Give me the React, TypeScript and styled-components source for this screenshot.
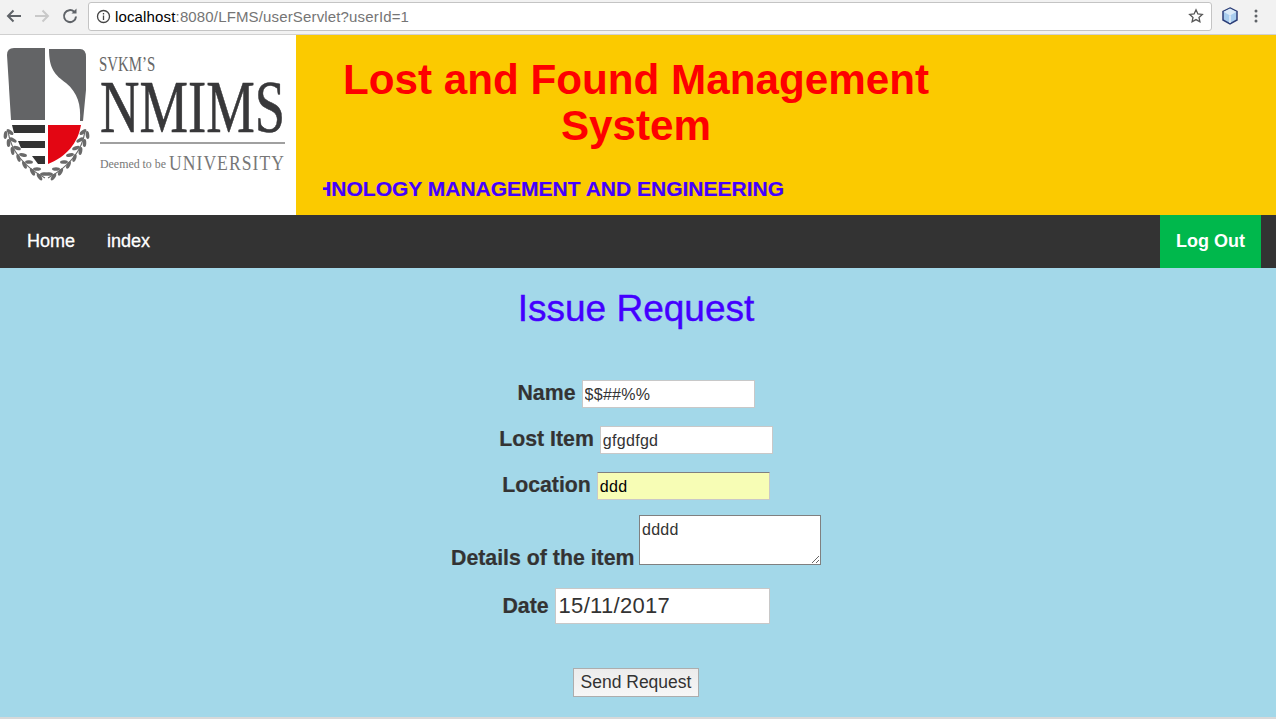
import React from "react";
import styled, { createGlobalStyle } from "styled-components";

const GlobalStyle = createGlobalStyle`
  html, body {
    margin: 0;
    padding: 0;
    height: 719px;
    overflow: hidden;
    font-family: "Liberation Sans", Arial, sans-serif;
  }
  * {
    box-sizing: border-box;
  }
`;

const Page = styled.div`
  display: flex;
  flex-direction: column;
  height: 719px;
  background: #a3d8e9;
`;

const Toolbar = styled.div`
  display: flex;
  align-items: center;
  height: 35px;
  flex: none;
  padding: 0 0 2px 4px;
  background: #f2f2f2;
  border-bottom: 1px solid #d0d0d0;
`;

const NavIcon = styled.svg`
  width: 20px;
  height: 20px;
  flex: none;
  margin-right: 8px;
`;

const AddressBar = styled.div`
  display: flex;
  align-items: center;
  flex: 1;
  height: 29px;
  padding: 0 7px;
  background: #fff;
  border: 1px solid #c4c4c4;
  border-radius: 3px;
`;

const Url = styled.span`
  flex: 1;
  margin-left: 4px;
  font-size: 15px;
  letter-spacing: 0.15px;
  color: #000;
`;

const UrlRest = styled.span`
  color: #757575;
`;

const ExtensionArea = styled.div`
  display: flex;
  align-items: center;
  gap: 15px;
  width: 64px;
  padding-left: 9px;
  flex: none;
`;

const Header = styled.header`
  display: flex;
  height: 180px;
  flex: none;
  background: #fbca00;
`;

const LogoBox = styled.div`
  width: 296px;
  flex: none;
  background: #fff;
`;

const Banner = styled.div`
  display: flex;
  flex-direction: column;
  padding: 22px 0 0 27px;
`;

const Title = styled.h1`
  width: 626px;
  margin: 0;
  font-size: 42.2px;
  line-height: 46px;
  font-weight: 700;
  text-align: center;
  color: #fe0000;
`;

const Marquee = styled.div`
  display: flex;
  justify-content: flex-end;
  width: 461px;
  margin-top: 28px;
  overflow: hidden;
  white-space: nowrap;
  font-size: 21px;
  line-height: 24px;
  font-weight: 700;
  color: #4400ff;
  -webkit-text-stroke: 0.2px #4400ff;
`;

const NavBar = styled.nav`
  display: flex;
  align-items: stretch;
  height: 53px;
  flex: none;
  padding: 0 15px 0 27px;
  background: #333;
`;

const NavLink = styled.a`
  display: flex;
  align-items: center;
  margin-right: 32px;
  font-size: 18px;
  color: #fff;
  -webkit-text-stroke: 0.3px #fff;
`;

const LogOut = styled.a`
  display: flex;
  align-items: center;
  justify-content: center;
  width: 101px;
  margin-left: auto;
  font-size: 18px;
  font-weight: 700;
  color: #fff;
  background: #00b84c;
`;

const Main = styled.main`
  flex: 1;
  display: flex;
  flex-direction: column;
  align-items: center;
  padding-right: 4px;
  border-bottom: 2px solid #d8d8d8;
`;

const Heading = styled.h2`
  margin: 19px 0 0;
  font-size: 37px;
  line-height: 43px;
  font-weight: 400;
  color: #4400ff;
  -webkit-text-stroke: 0.4px #4400ff;
`;

const Form = styled.form`
  display: flex;
  flex-direction: column;
  align-items: center;
  margin-top: 50px;
`;

const Row = styled.div<{ $bottom: number }>`
  display: flex;
  align-items: baseline;
  justify-content: center;
  gap: 6px;
  margin-bottom: ${(p) => p.$bottom}px;
`;

const InlineRow = styled.div`
  text-align: center;
  margin-bottom: 17px;
`;

const Label = styled.label`
  font-size: 21.3px;
  font-weight: 700;
  color: #333;
  -webkit-text-stroke: 0.2px #333;
`;

const TextInput = styled.input<{ $focused?: boolean }>`
  width: 173px;
  height: 28px;
  padding: 1px 2px 0;
  font-family: "Liberation Sans", Arial, sans-serif;
  font-size: 16px;
  letter-spacing: 0.3px;
  color: ${(p) => (p.$focused ? "#000" : "#333")};
  background: ${(p) => (p.$focused ? "#f7fdb5" : "#fff")};
  border: 1px solid #c8c8c8;
  border-top-color: ${(p) => (p.$focused ? "#808080" : "#c8c8c8")};
  outline: none;
  border-radius: 0;
`;

const DetailsArea = styled.textarea`
  display: inline-block;
  width: 182px;
  height: 50px;
  margin: 0;
  padding: 5px 2px;
  font-family: "Liberation Sans", Arial, sans-serif;
  font-size: 16px;
  letter-spacing: 0.3px;
  line-height: 18px;
  color: #333;
  background: #fff;
  border: 1px solid #808080;
  outline: none;
`;

const DateInput = styled.input`
  width: 215px;
  height: 36px;
  padding: 0 3px;
  font-family: "Liberation Sans", Arial, sans-serif;
  font-size: 22px;
  letter-spacing: 0.3px;
  color: #333;
  background: #fff;
  border: 1px solid #c8c8c8;
  outline: none;
`;

const SendButton = styled.button`
  width: 126px;
  height: 29px;
  padding: 0;
  font-family: "Liberation Sans", Arial, sans-serif;
  font-size: 17.5px;
  color: #333;
  background: linear-gradient(#ececec, #f6f6f6);
  border: 1px solid #adadad;
  border-radius: 0;
`;

// points along the laurel stem: x, y, stem angle
const leaves = [
  [7, 98, 72],
  [10, 106, 64],
  [14, 114, 56],
  [20, 121, 48],
  [26, 128, 40],
  [34, 135, 35],
  [41, 140, 30],
];

const LaurelBranch = () => (
  <g fill="#6a6a6a">
    <path d="M8 96 C11 118 25 132 45 143" fill="none" stroke="#6a6a6a" strokeWidth="1.2" />
    {leaves.map(([x, y, a]) => (
      <g key={y}>
        <ellipse cx={x - 1.5} cy={y + 2} rx="4" ry="1.8" transform={`rotate(${a + 25} ${x - 1.5} ${y + 2})`} />
        <ellipse cx={x + 3} cy={y - 1} rx="4" ry="1.8" transform={`rotate(${a - 35} ${x + 3} ${y - 1})`} />
      </g>
    ))}
  </g>
);

const ShieldLogo = () => (
  <svg width="296" height="180" viewBox="0 0 296 180">
    <path d="M7 20 Q7 13 14 13 L45 13 L45 85 L11 85 Z" fill="#636466" />
    <path
      d="M49 14 L80 14 Q86 14 86 22 L86 55 L83 86 L80 86 C81 70 78 58 66 48 C55 40 49 34 49 14 Z"
      fill="#636466"
    />
    <path d="M12 90 H45 V98 H14 Z" fill="#333" />
    <path d="M18 106 H45 V113 H21 Z" fill="#333" />
    <path d="M32 121 H45 V129 H38 Z" fill="#333" />
    <path d="M48 90 H81 C78 108 66 122 48 129 Z" fill="#e30613" />
    <LaurelBranch />
    <g transform="translate(93 0) scale(-1 1)">
      <LaurelBranch />
    </g>
    <text transform="translate(99 36) scale(0.71 1)" fontFamily="Liberation Serif" fontSize="21" fill="#666">
      SVKM’S
    </text>
    <text transform="translate(100 97) scale(0.728 1)" fontFamily="Liberation Serif" fontSize="75" fill="#38383a" stroke="#38383a" strokeWidth="0.6">
      NMIMS
    </text>
    <rect x="100" y="107" width="185" height="2" fill="#a0a0a0" />
    <text x="100" y="133" fontFamily="Liberation Serif" fontSize="13.5" fill="#777" textLength="66" lengthAdjust="spacingAndGlyphs">
      Deemed to be
    </text>
    <text transform="translate(169 135) scale(0.8 1)" fontFamily="Liberation Serif" fontSize="22" letterSpacing="1.3" fill="#777">
      UNIVERSITY
    </text>
  </svg>
);

export default function App() {
  return (
    <Page>
      <GlobalStyle />
      <Toolbar>
        <NavIcon viewBox="0 0 20 20" fill="none" stroke="#5f6368" strokeWidth="2">
          <path d="M17 10H4M9.5 4.500L4 10l5.500 5.500" />
        </NavIcon>
        <NavIcon viewBox="0 0 20 20" fill="none" stroke="#c9c9c9" strokeWidth="2">
          <path d="M3 10h13M10.500 4.500L16 10l-5.500 5.500" />
        </NavIcon>
        <NavIcon viewBox="0 0 20 20" fill="none" stroke="#5f6368" strokeWidth="2">
          <path d="M16 10.500a6 6 0 1 1-1.800-4.700" />
          <path d="M16.500 2.500v5h-5z" fill="#5f6368" stroke="none" />
        </NavIcon>
        <AddressBar>
          <svg width="15" height="15" viewBox="0 0 15 15" fill="none" stroke="#444" strokeWidth="1.300">
            <circle cx="7.500" cy="7.500" r="6" />
            <path d="M7.500 6.500v4.500M7.500 4v1.400" />
          </svg>
          <Url>
            localhost<UrlRest>:8080/LFMS/userServlet?userId=1</UrlRest>
          </Url>
          <svg width="16" height="16" viewBox="0 0 16 16" fill="none" stroke="#555" strokeWidth="1.300">
            <path d="M8 1.800l1.900 4.100 4.400.5-3.300 3 .9 4.400L8 11.600l-3.900 2.200.9-4.400-3.300-3 4.400-.5z" />
          </svg>
        </AddressBar>
        <ExtensionArea>
          <svg width="18" height="18" viewBox="0 0 18 18">
            <path d="M9 1l7 3.500v8.500L9 17l-7-4V4.500z" fill="#a9cdee" stroke="#2c3e78" strokeWidth="1.500" />
            <path d="M9 8.500L2.500 4.800 9 1.500l6.500 3.300z" fill="#dcebf8" />
            <path d="M9 8.500V16" stroke="#fff" strokeWidth="1" />
          </svg>
          <svg width="4" height="14" viewBox="0 0 4 14" fill="#5f6368">
            <circle cx="2" cy="2" r="1.500" />
            <circle cx="2" cy="7" r="1.500" />
            <circle cx="2" cy="12" r="1.500" />
          </svg>
        </ExtensionArea>
      </Toolbar>

      <Header>
        <LogoBox>
          <ShieldLogo />
        </LogoBox>
        <Banner>
          <Title>Lost and Found Management System</Title>
          <Marquee>MUKESH PATEL SCHOOL OF TECHNOLOGY MANAGEMENT AND ENGINEERING</Marquee>
        </Banner>
      </Header>

      <NavBar>
        <NavLink>Home</NavLink>
        <NavLink>index</NavLink>
        <LogOut>Log Out</LogOut>
      </NavBar>

      <Main>
        <Heading>Issue Request</Heading>
        <Form>
          <Row $bottom={18}>
            <Label>Name</Label>
            <TextInput defaultValue="$$##%%" />
          </Row>
          <Row $bottom={18}>
            <Label>Lost Item</Label>
            <TextInput defaultValue="gfgdfgd" />
          </Row>
          <Row $bottom={15}>
            <Label>Location</Label>
            <TextInput $focused defaultValue="ddd" />
          </Row>
          <InlineRow>
            <Label>Details of the item</Label> <DetailsArea defaultValue="dddd" />
          </InlineRow>
          <Row $bottom={44}>
            <Label>Date</Label>
            <DateInput defaultValue="15/11/2017" />
          </Row>
          <SendButton type="button">Send Request</SendButton>
        </Form>
      </Main>
    </Page>
  );
}
